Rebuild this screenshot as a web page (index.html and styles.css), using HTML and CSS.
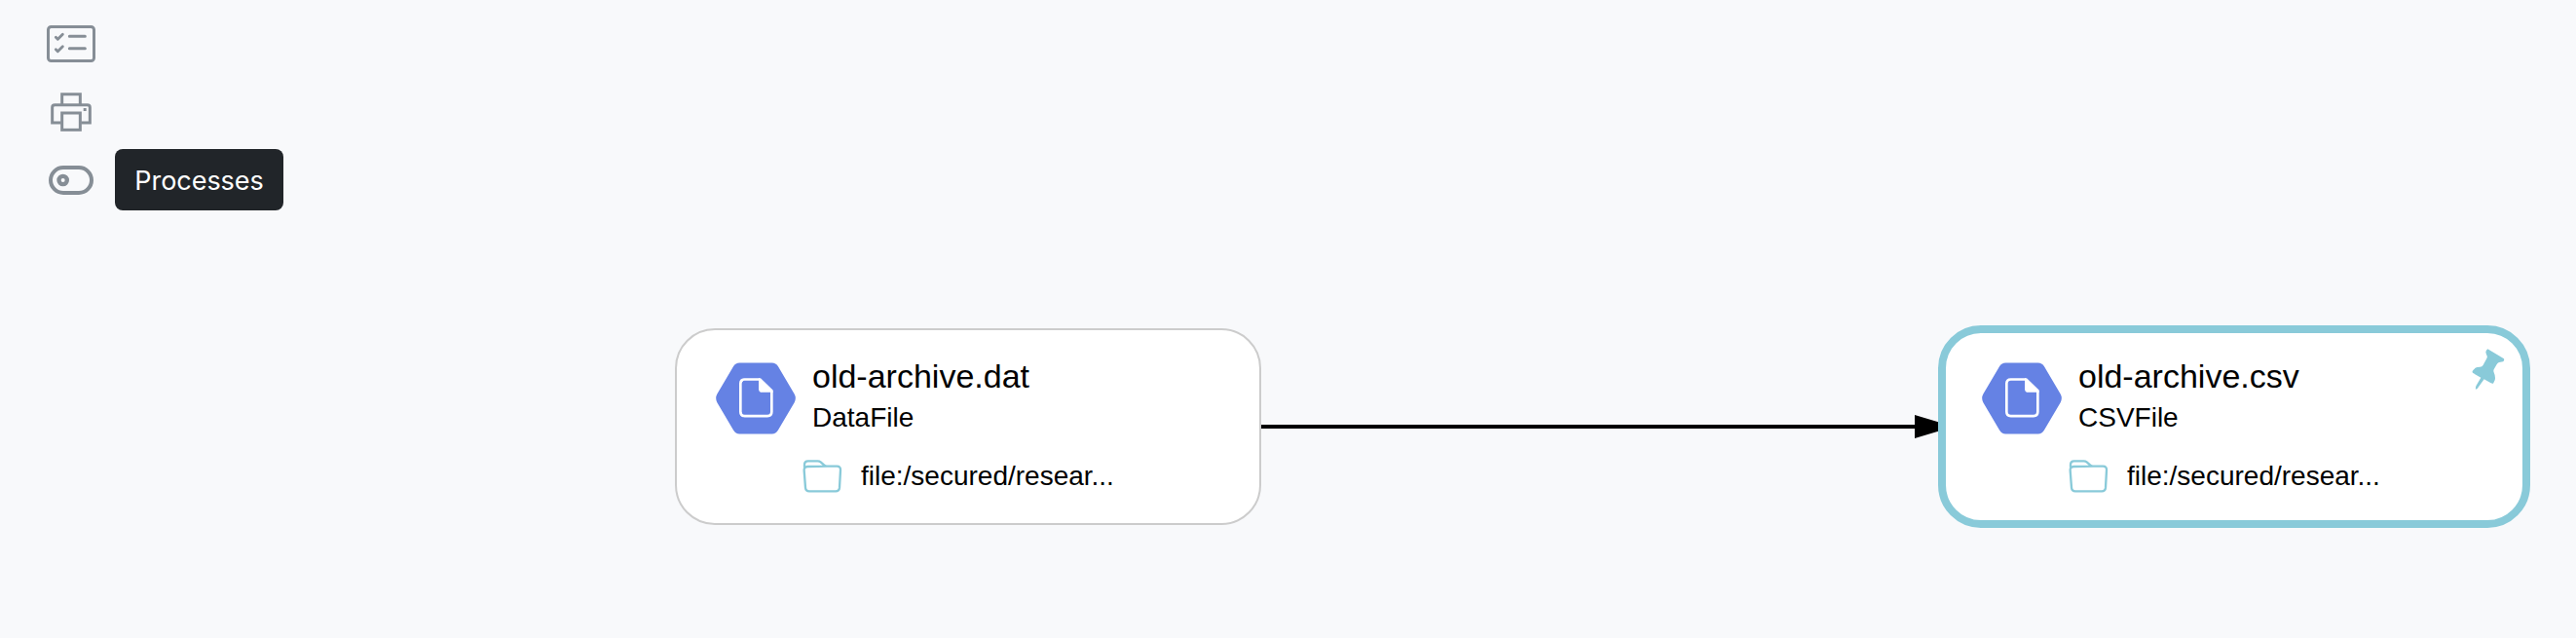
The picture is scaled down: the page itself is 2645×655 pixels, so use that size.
FILE: index.html
```html
<!DOCTYPE html>
<html lang="en">
<head>
<meta charset="utf-8">
<title>Lineage graph</title>
<link rel="stylesheet" href="styles.css">
</head>
<body>
<svg class="defs" width="0" height="0" aria-hidden="true">
  <symbol id="hex-file" viewBox="165 155 246 221">
    <path class="hex-fill" d="M238 156H338Q350 156 357 167L407 252Q414 265 407 278L357 363Q350 375 338 375H238Q226 375 219 363L169 278Q162 265 169 252L219 167Q226 156 238 156Z"/>
    <path class="file-line" d="M300 207H254Q241 207 241 220V307Q241 320 254 320H324Q337 320 337 307V243"/>
    <path class="file-fold" d="M297 203H303L341 240V247H308Q297 247 297 236Z"/>
  </symbol>
  <symbol id="folder" viewBox="431 452 123 102">
    <path class="folder-line" d="M437 474V467Q437 456 448 456H478Q483 456 487 459L498 469Q501 472 506 472H537Q549 472 548 484L545 538Q544 549 533 549H452Q441 549 440 538L436 485Q435 474 447 473L506 472"/>
  </symbol>
</svg>
<main class="canvas">
  <nav class="toolbar">
    <div class="tool">
      <svg width="50" height="38" viewBox="54 48 150 114">
        <rect class="line" x="58.5" y="52.500" width="141" height="105" rx="9" stroke-width="9"/>
        <path class="line round" stroke-width="9" d="M124 81.500H172M124 119H172"/>
        <path class="line round" stroke-width="8.500" d="M82 85L88 91L103 76M82 122L88 128L103 113"/>
      </svg>
    </div>
    <div class="tool">
      <svg width="42" height="40" viewBox="66 255 126 120">
        <path class="line" stroke-width="9" d="M101 293V260H157V293M98 348H71V301Q71 293 79 293H179Q187 293 187 301V348H160"/>
        <rect class="line" x="101" y="318" width="56" height="52" stroke-width="9"/>
        <rect class="dot" x="167" y="303" width="9" height="9"/>
      </svg>
    </div>
    <div class="tool">
      <svg width="46" height="30" viewBox="60 480 138 90">
        <rect class="line" x="66" y="486" width="126" height="78" rx="39" stroke-width="12"/>
        <circle class="line" cx="104" cy="525" r="12.500" stroke-width="13"/>
      </svg>
    </div>
  </nav>
  <div class="tooltip">Processes</div>

  <svg class="edge" width="711" height="24" viewBox="0 0 711 24">
    <path d="M0 10H671V0L711 12L671 24V14H0Z"/>
  </svg>

  <article class="node source">
    <div class="head">
      <svg class="type" width="82" height="74"><use href="#hex-file"/></svg>
      <div class="titles">
        <div class="name">old-archive.dat</div>
        <div class="kind">DataFile</div>
      </div>
    </div>
    <div class="path">
      <svg width="41" height="34"><use href="#folder"/></svg>
      <span>file:/secured/resear...</span>
    </div>
  </article>

  <article class="node target">
    <div class="head">
      <svg class="type" width="82" height="74"><use href="#hex-file"/></svg>
      <div class="titles">
        <div class="name">old-archive.csv</div>
        <div class="kind">CSVFile</div>
      </div>
    </div>
    <div class="path">
      <svg width="41" height="34"><use href="#folder"/></svg>
      <span>file:/secured/resear...</span>
    </div>
    <svg class="pin" width="34" height="42" viewBox="894 114 102 126">
      <path d="M943 115L993 145Q995 151 990 154L978 156Q974 157 971 162L962 178Q960 182 962 187Q968 201 965 211L960 221Q957 222 953 220L932 208L911 237L906 239Q905 236 907 229L922 203L898 189Q895 187 896 183Q901 174 911 171L919 170Q926 170 929 164L940 144Q943 139 940 134L937 125Q937 119 943 115Z"/>
    </svg>
  </article>
</main>
</body>
</html>
```

FILE: styles.css
```css
body {
  margin: 0;
  background: #f8f9fb;
}

.defs {
  position: absolute;
}

.canvas {
  position: relative;
  height: 655px;
  overflow: hidden;
}

.toolbar {
  display: flex;
  flex-direction: column;
  width: 50px;
  padding: 10px 48px;
}

.tool {
  display: flex;
  align-items: center;
  justify-content: center;
  height: 70px;
}

.line {
  fill: none;
  stroke: #868e96;
}

.round {
  stroke-linecap: round;
  stroke-linejoin: round;
}

.dot {
  fill: #868e96;
}

.tooltip {
  position: absolute;
  left: 118px;
  top: 153px;
  box-sizing: border-box;
  width: 173px;
  height: 63px;
  border-radius: 8px;
  background: #212529;
  color: #fff;
  font: 27px/65px Inter, sans-serif;
  letter-spacing: -0.05px;
  text-align: center;
}

.edge {
  position: absolute;
  left: 1295px;
  top: 426px;
}

.node {
  position: absolute;
  box-sizing: border-box;
  background: #fff;
  color: #000;
  font-family: "Liberation Sans", Arial, sans-serif;
}

.source {
  left: 693px;
  top: 337px;
  width: 602px;
  height: 202px;
  padding: 33px 40px;
  border: 2px solid #ccc;
  border-radius: 41px;
}

.target {
  left: 1990px;
  top: 334px;
  width: 608px;
  height: 208px;
  padding: 30px 37px;
  border: 8px solid #89cad9;
  border-radius: 44px;
}

.head {
  display: flex;
  gap: 17px;
  height: 99px;
}

.name {
  margin-top: -3px;
  font-size: 34px;
  line-height: 34px;
}

.kind {
  padding-top: 9px;
  font-size: 28px;
  line-height: 34px;
}

.path {
  display: flex;
  align-items: center;
  gap: 19px;
  padding-left: 89px;
  font-size: 28px;
  line-height: 34px;
}

.path span {
  padding-top: 1px;
}

.hex-fill {
  fill: #6582e4;
}

.file-line {
  fill: none;
  stroke: #fff;
  stroke-width: 8px;
}

.file-fold {
  fill: #fff;
}

.folder-line {
  fill: none;
  stroke: #89cad9;
  stroke-width: 7px;
  stroke-linecap: round;
}

.pin {
  position: absolute;
  left: 540px;
  top: 16px;
  fill: #89cad9;
}
```
